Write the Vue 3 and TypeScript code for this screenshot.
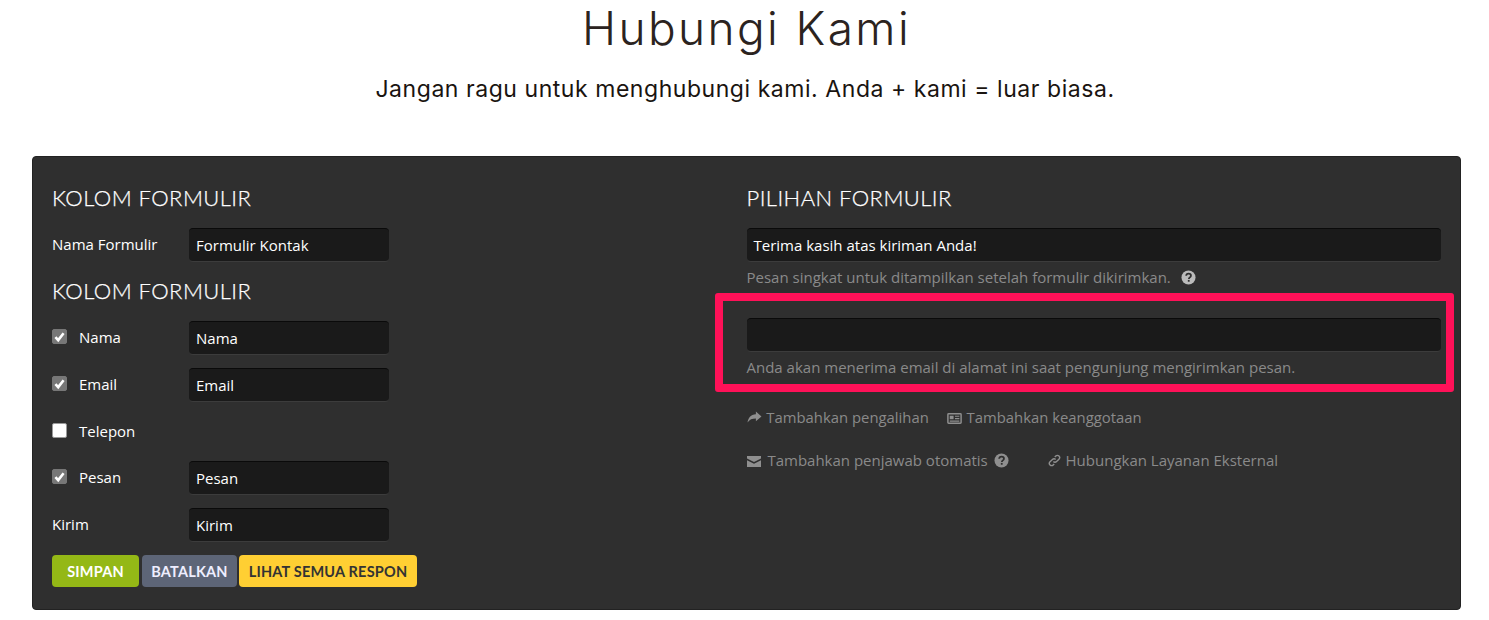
<script setup lang="ts">
interface Field { label: string; value?: string; check?: boolean; checked?: boolean; tight?: boolean }
const fields: Field[] = [
  { label: 'Nama', value: 'Nama', check: true, checked: true },
  { label: 'Email', value: 'Email', check: true, checked: true },
  { label: 'Telepon', check: true, checked: false, tight: true },
  { label: 'Pesan', value: 'Pesan', check: true, checked: true },
  { label: 'Kirim', value: 'Kirim' },
]
</script>

<template>
  <div class="page">
    <header class="hero">
      <h1>Hubungi Kami</h1>
      <p>Jangan ragu untuk menghubungi kami. Anda + kami = luar biasa.</p>
    </header>
    <main class="card">
      <section class="col">
        <h2>KOLOM FORMULIR</h2>
        <div class="row first">
          <span class="label">Nama Formulir</span>
          <div class="input short">Formulir Kontak</div>
        </div>
        <h2 class="second">KOLOM FORMULIR</h2>
        <div v-for="f in fields" :key="f.label" class="row" :class="{ tight: f.tight }">
          <span v-if="f.check" class="check" :class="{ on: f.checked }">
            <svg v-if="f.checked" viewBox="0 0 14 14" width="14" height="14"><path d="M2.6 7.2l3 3.200 5.800-7.400" fill="none" stroke="#fff" stroke-width="2.800"/></svg>
          </span>
          <span class="label" :class="{ checked: f.check }">{{ f.label }}</span>
          <div v-if="f.value" class="input short">{{ f.value }}</div>
        </div>
        <div class="buttons">
          <button class="btn green">SIMPAN</button>
          <button class="btn slate">BATALKAN</button>
          <button class="btn yellow">LIHAT SEMUA RESPON</button>
        </div>
      </section>
      <section class="col">
        <h2>PILIHAN FORMULIR</h2>
        <div class="input top">Terima kasih atas kiriman Anda!</div>
        <p class="hint">Pesan singkat untuk ditampilkan setelah formulir dikirimkan.
          <svg class="help" viewBox="0 0 16 16" width="15" height="15"><circle cx="8" cy="8" r="7.500" fill="#bbb"/><path d="M5.500 6.200c.1-1.500 1.200-2.300 2.600-2.300s2.500.8 2.500 2.100c0 1.900-2.200 1.800-2.200 3.500" fill="none" stroke="#2f2f2f" stroke-width="1.900"/><rect x="7.300" y="10.600" width="1.900" height="1.900" fill="#2f2f2f"/></svg>
        </p>
        <div class="email">
          <div class="input"></div>
          <p class="hint">Anda akan menerima email di alamat ini saat pengunjung mengirimkan pesan.</p>
          <div class="highlight"></div>
        </div>
        <div class="links one">
          <span class="link">
            <svg viewBox="0 0 16 14" width="15" height="13"><path d="M9.500 0.500L15.500 5.800 9.500 11V8C5.500 8 2.500 9 0.500 12.500 1 7.500 4 3.800 9.500 3.500z" fill="#8f8f8f"/></svg>
            Tambahkan pengalihan
          </span>
          <span class="link l2">
            <svg viewBox="0 0 16 12" width="15" height="11"><rect x="0.800" y="0.800" width="14.400" height="10.400" rx="0.800" fill="none" stroke="#8f8f8f" stroke-width="1.600"/><rect x="2.800" y="3" width="4.200" height="3.800" fill="#8f8f8f"/><path d="M8.500 3.600h4.800M8.500 6.100h4.800M2.800 8.900h10.500" stroke="#8f8f8f" stroke-width="1.200"/></svg>
            Tambahkan keanggotaan
          </span>
        </div>
        <div class="links two">
          <span class="link">
            <svg class="mail" viewBox="0 0 14 11" width="14" height="11"><path d="M0 0h14v2.400L7 6 0 2.400z M0 4.200l7 3.600 7-3.600V11H0z" fill="#8f8f8f"/></svg>
            Tambahkan penjawab otomatis
            <svg class="help q2" viewBox="0 0 16 16" width="15" height="15"><circle cx="8" cy="8" r="7.500" fill="#8f8f8f"/><path d="M5.500 6.200c.1-1.500 1.200-2.300 2.600-2.300s2.500.8 2.500 2.100c0 1.900-2.200 1.800-2.200 3.500" fill="none" stroke="#2f2f2f" stroke-width="1.900"/><rect x="7.300" y="10.600" width="1.900" height="1.900" fill="#2f2f2f"/></svg>
          </span>
          <span class="link l4">
            <svg viewBox="0 0 14 14" width="13" height="13"><path d="M5.800 8.200a2.400 2.400 0 0 0 3.400 0l2.600-2.600a2.400 2.400 0 0 0-3.400-3.400L7.300 3.300M8.200 5.800a2.400 2.400 0 0 0-3.400 0L2.200 8.400a2.400 2.400 0 0 0 3.400 3.400l1.100-1.100" fill="none" stroke="#8f8f8f" stroke-width="1.500"/></svg>
            Hubungkan Layanan Eksternal
          </span>
        </div>
      </section>
    </main>
  </div>
</template>

<style scoped>
.page { height: 620px; overflow: hidden; font-family: "Open Sans", sans-serif; font-size: 15px; }
.hero { text-align: center; color: #2b2320; height: 156px; font-family: "Inter", "Noto Sans", sans-serif; }
.hero h1 { margin: 0; padding-left: 4px; font-size: 46px; line-height: 56px; font-weight: 300; letter-spacing: 2.400px; }
.hero p { margin: 16px 0 0; padding-left: 1px; font-size: 23px; line-height: 34px; font-weight: 400; letter-spacing: 0.550px; color: #1a1410; }
.card {
  margin: 0 28px 0 32px; height: 454px; box-sizing: border-box; padding: 20px 19px;
  background: #2f2f2f; border: 1px solid #222; border-radius: 4px;
  display: grid; grid-template-columns: 1fr 1fr; color: #fff;
}
.col { min-width: 0; }
h2 { margin: 6px 0 0; font-family: "Lato", sans-serif; font-size: 22px; line-height: 30px; font-weight: 300; letter-spacing: 0.450px; -webkit-text-stroke: 0.25px #fff; color: #fff; }
h2.second { margin-top: 14px; }
.row { display: flex; align-items: flex-start; height: 47px; }
.row.tight { height: 46px; }
.row.first { height: 34px; margin-top: 15px; }
h2.second + .row { margin-top: 15px; }
.label { width: 137px; font-size: 15px; line-height: 32px; flex: none; }
.label.checked { width: 110px; }
.check {
  width: 15px; height: 15px; margin: 8px 12px 0 0; flex: none; background: #fff; border: 1px solid #999;
  border-radius: 2px; box-sizing: border-box; display: flex; align-items: center; justify-content: center;
}
.check.on { background: #777; border-color: #777; }
.input {
  height: 34px; box-sizing: border-box; background: #1a1a1a; border-radius: 4px; border-top: 1px solid #0a0a0a;
  border-bottom: 1px solid #3c3c3c; padding: 0 7px; font-size: 15px; line-height: 32px; color: #fff;
}
.short { width: 200px; }
.top { margin-top: 15px; }
.hint { margin: 5px 0 0; line-height: 20px; font-size: 15px; color: #8a8a8a; }
.help { vertical-align: -2px; margin-left: 6px; }
.email { position: relative; margin-top: 31px; }
.highlight {
  position: absolute; left: -32px; right: -13px; top: -25px; bottom: -15px;
  border: 8px solid #ff1158; border-radius: 3px; pointer-events: none;
}
.links { display: flex; color: #8a8a8a; line-height: 20px; font-size: 14.850px; }
.links.one { margin-top: 30px; }
.links.two { margin-top: 23px; font-size: 15px; }
.link svg { vertical-align: -1px; margin-right: 1px; }
.link .mail { margin-right: 3px; }
.link .q2 { margin-left: 2px; vertical-align: -2px; }
.l2 { margin-left: 18px; }
.l4 { margin-left: 38px; }
.buttons { display: flex; gap: 3px; }
.btn {
  height: 32px; border: 0; border-radius: 4px; padding: 0; font-family: "Lato", sans-serif; font-weight: 700; font-size: 14.500px; letter-spacing: 0.200px;
}
.green { width: 87px; background: #94b816; color: #fff; }
.slate { width: 95px; background: #5d6577; color: #eef; }
.yellow { width: 178px; background: #ffcf33; color: #333; margin-left: -1px; }
</style>
